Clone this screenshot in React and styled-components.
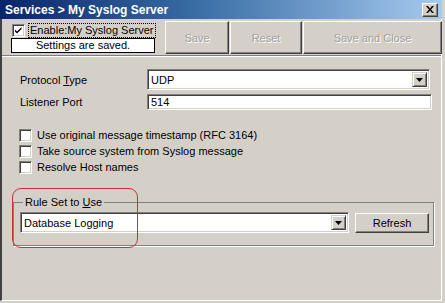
import styled, { createGlobalStyle } from "styled-components";

const Global = createGlobalStyle`
  body {
    margin: 0;
    background: #d4d0c8;
    font-family: "Liberation Sans", Arial, sans-serif;
    font-size: 11px;
    color: #000;
  }
  * { box-sizing: border-box; }
`;

function CheckBox({ checked }) {
  return (
    <Box>
      {checked && (
        <svg width="9" height="9" viewBox="0 0 9 9">
          <path d="M1 3.5 L3 5.5 L7.5 1 L7.5 3 L3 7.5 L1 5.5 Z" fill="#000" />
        </svg>
      )}
    </Box>
  );
}

function Combo({ value, width }) {
  return (
    <Sunken $w={width} $h={21}>
      <FieldText>{value}</FieldText>
      <DropButton>
        <svg width="7" height="4" viewBox="0 0 7 4">
          <path d="M0 0 H7 L3.5 4 Z" fill="#000" />
        </svg>
      </DropButton>
    </Sunken>
  );
}

function App() {
  return (
    <>
      <Global />
      <Window>
        <TitleBar>
          <span>Services &gt; My Syslog Server</span>
          <CloseButton>
            <svg width="8" height="7" viewBox="0 0 8 7">
              <path d="M0 0 H2 L4 2.5 L6 0 H8 L5 3.5 L8 7 H6 L4 4.5 L2 7 H0 L3 3.5 Z" fill="#000" />
            </svg>
          </CloseButton>
        </TitleBar>
        <Body>
          <Toolbar>
            <LeftCol>
              <EnableRow>
                <CheckBox checked />
                <FocusLabel>Enable:My Syslog Server</FocusLabel>
              </EnableRow>
              <StatusBox>Settings are saved.</StatusBox>
            </LeftCol>
            <ButtonRow>
              <ToolButton $w={64} disabled>Save</ToolButton>
              <ToolButton $w={72} disabled>Reset</ToolButton>
              <ToolButton $w={139} disabled>Save and Close</ToolButton>
            </ButtonRow>
          </Toolbar>
          <Separator />
          <Form>
            <FieldGrid>
              <Label>Protocol <u>T</u>ype</Label>
              <Combo value="UDP" width={283} />
              <Label>Listener Port</Label>
              <Sunken $w={285} $h={16}>
                <FieldText>514</FieldText>
              </Sunken>
            </FieldGrid>
            <CheckList>
              <CheckRow><CheckBox />Use original message timestamp (RFC 3164)</CheckRow>
              <CheckRow><CheckBox />Take source system from Syslog message</CheckRow>
              <CheckRow><CheckBox />Resolve Host names</CheckRow>
            </CheckList>
            <Group>
              <Legend>Rule Set to <u>U</u>se</Legend>
              <GroupRow>
                <Combo value="Database Logging" width={329} />
                <PushButton>Refresh</PushButton>
              </GroupRow>
            </Group>
          </Form>
        </Body>
        <Annotation />
      </Window>
    </>
  );
}
export default App;

const Window = styled.div`
  position: relative;
  width: 442px;
  height: 301px;
  display: flex;
  flex-direction: column;
  background: #d4d0c8;
`;
const TitleBar = styled.div`
  height: 19px;
  display: flex;
  align-items: center;
  justify-content: space-between;
  padding: 0 4px 0 5px;
  background: linear-gradient(to right, #0a246a 0%, #3a6ea5 45%, #a6caf0 100%);
  color: #fff;
  font-size: 12px;
  font-weight: bold;
`;
const CloseButton = styled.div`
  width: 16px;
  height: 14px;
  display: flex;
  align-items: center;
  justify-content: center;
  background: #d4d0c8;
  border: 1px solid;
  border-color: #fff #404040 #404040 #fff;
  box-shadow: inset -1px -1px 0 #808080;
`;
const Body = styled.div`
  flex: 1;
  display: flex;
  flex-direction: column;
  border-left: 2px solid #404040;
  border-right: 1px solid #fff;
  border-bottom: 1px solid #fff;
`;
const Toolbar = styled.div`
  height: 36px;
  display: flex;
  align-items: flex-start;
  padding-top: 2px;
`;
const LeftCol = styled.div`
  width: 144px;
  margin-left: 9px;
  padding-top: 1px;
  display: flex;
  flex-direction: column;
`;
const EnableRow = styled.div`
  height: 16px;
  display: flex;
  align-items: center;
  padding-left: 1px;
  gap: 3px;
`;
const FocusLabel = styled.span`
  border: 1px dotted #000;
  padding: 0 1px;
  line-height: 13px;
  white-space: nowrap;
`;
const StatusBox = styled.div`
  height: 15px;
  border: 1px solid #000;
  background: #fff;
  text-align: center;
  line-height: 13px;
`;
const ButtonRow = styled.div`
  margin-left: 10px;
  display: flex;
  gap: 1px;
`;
const ToolButton = styled.button`
  width: ${p => p.$w}px;
  height: 33px;
  font: inherit;
  color: #a0a0a0;
  text-shadow: 1px 1px 0 #fff;
  background: #d4d0c8;
  border: 1px solid;
  border-color: #fff #404040 #404040 #fff;
  box-shadow: inset -1px -1px 0 #808080;
  padding: 0;
`;
const Separator = styled.div`
  border-top: 1px solid #808080;
  border-bottom: 1px solid #fff;
`;
const Form = styled.div`
  padding: 12px 0 0 11px;
  display: flex;
  flex-direction: column;
`;
const FieldGrid = styled.div`
  margin-left: 7px;
  display: grid;
  grid-template-columns: 127px auto;
  row-gap: 4px;
  align-items: center;
`;
const Label = styled.span`
  white-space: nowrap;
`;
const Sunken = styled.div`
  width: ${p => p.$w}px;
  height: ${p => p.$h}px;
  display: flex;
  align-items: center;
  background: #fff;
  border: 1px solid;
  border-color: #808080 #fff #fff #808080;
  box-shadow: inset 1px 1px 0 #404040, inset -1px -1px 0 #d4d0c8;
  padding: 2px;
`;
const FieldText = styled.span`
  flex: 1;
  padding-left: 1px;
  white-space: nowrap;
`;
const DropButton = styled.div`
  width: 15px;
  align-self: stretch;
  display: flex;
  align-items: center;
  justify-content: center;
  background: #d4d0c8;
  border: 1px solid;
  border-color: #d4d0c8 #404040 #404040 #d4d0c8;
  box-shadow: inset 1px 1px 0 #fff, inset -1px -1px 0 #808080;
`;
const CheckList = styled.div`
  margin: 17px 0 0 6px;
  display: flex;
  flex-direction: column;
`;
const CheckRow = styled.label`
  height: 16px;
  display: flex;
  align-items: center;
  gap: 5px;
  white-space: nowrap;
`;
const Box = styled.span`
  width: 13px;
  height: 13px;
  flex: none;
  display: flex;
  align-items: center;
  justify-content: center;
  background: #fff;
  border: 1px solid;
  border-color: #808080 #fff #fff #808080;
  box-shadow: inset 1px 1px 0 #404040, inset -1px -1px 0 #d4d0c8;
`;
const Group = styled.fieldset`
  width: 420px;
  margin: 21px 0 0 0;
  padding: 3px 4px 12px 6px;
  border: 1px solid #808080;
  box-shadow: 1px 1px 0 #fff;
`;
const Legend = styled.legend`
  padding: 0 2px;
  margin-left: 3px;
  line-height: 13px;
`;
const GroupRow = styled.div`
  display: flex;
  align-items: center;
  gap: 6px;
`;
const PushButton = styled.button`
  width: 74px;
  height: 20px;
  font: inherit;
  color: #000;
  background: #d4d0c8;
  border: 1px solid;
  border-color: #fff #404040 #404040 #fff;
  box-shadow: inset -1px -1px 0 #808080;
  padding: 0;
`;
const Annotation = styled.div`
  position: absolute;
  left: 12px;
  top: 188px;
  width: 126px;
  height: 60px;
  border: 1px solid #c8303c;
  border-radius: 9px;
  pointer-events: none;
`;
